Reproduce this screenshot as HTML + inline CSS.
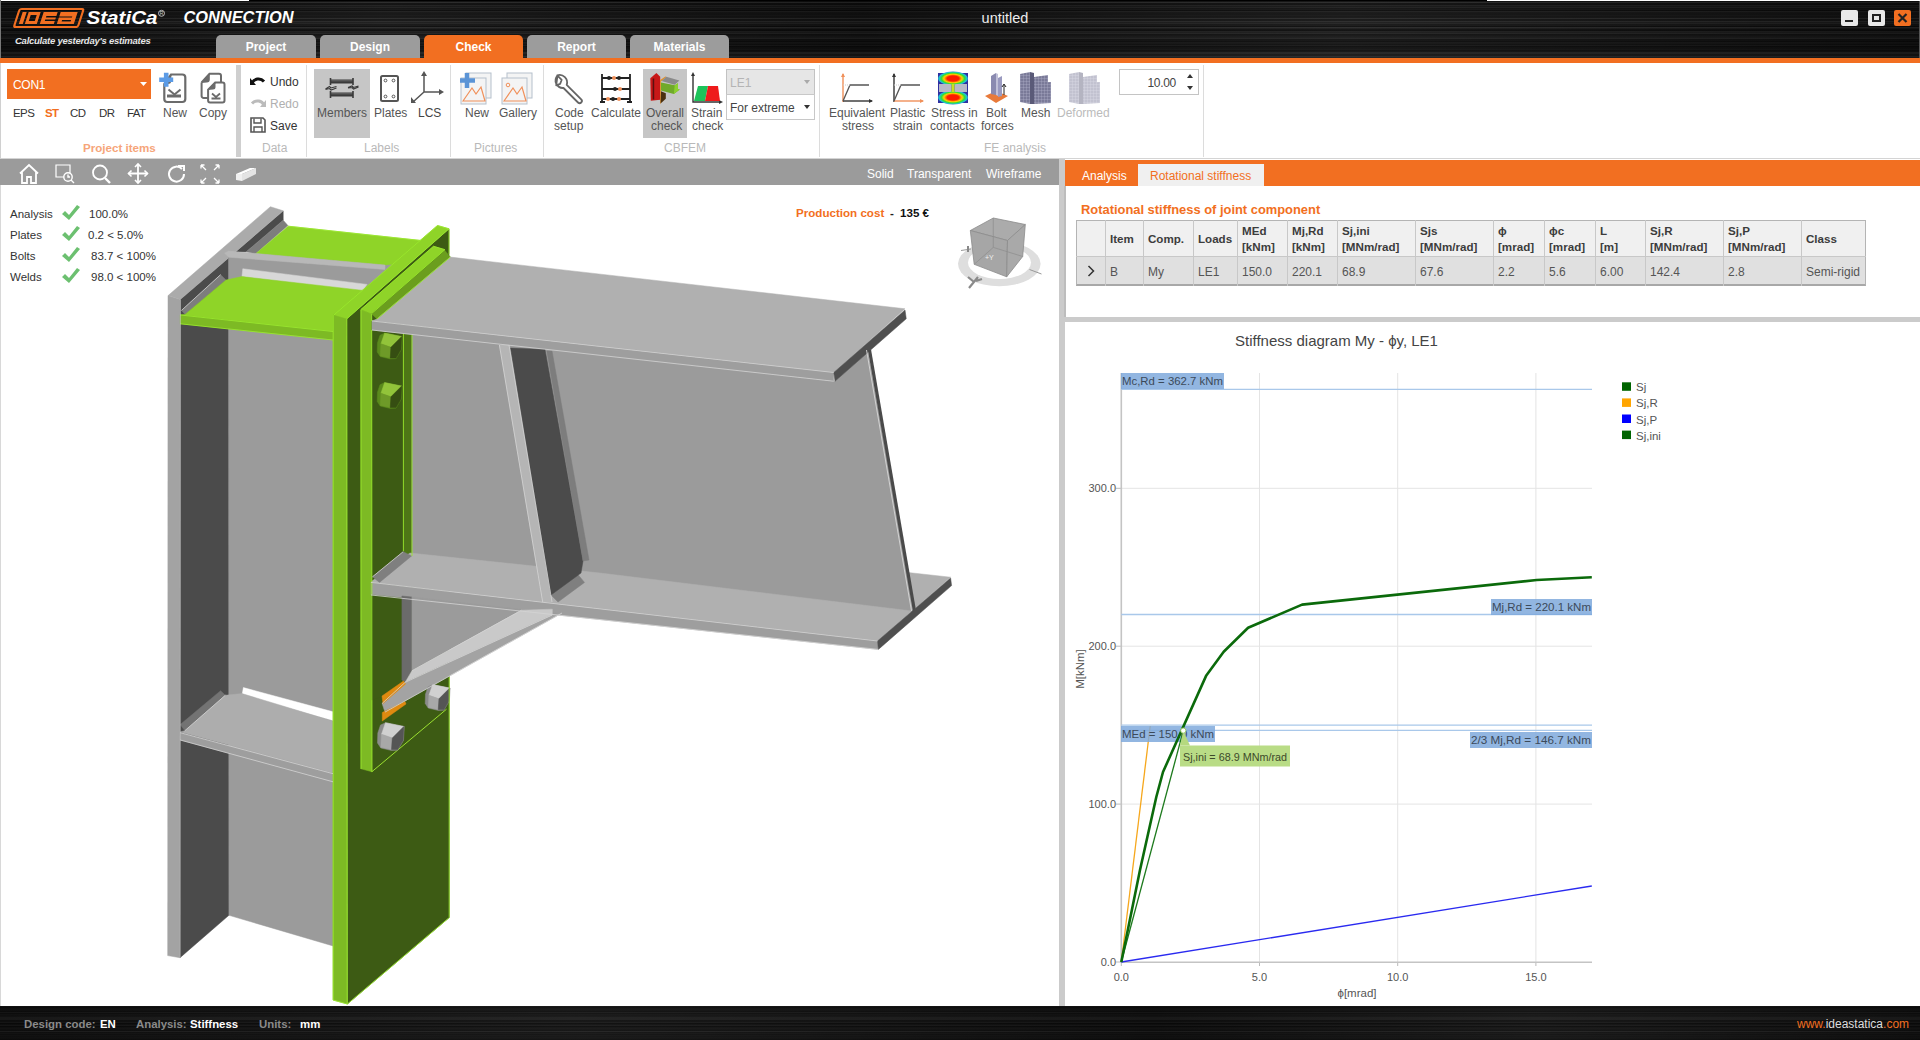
<!DOCTYPE html>
<html><head><meta charset="utf-8">
<style>
*{margin:0;padding:0;box-sizing:border-box}
html,body{width:1920px;height:1040px;overflow:hidden;background:#fff;font-family:"Liberation Sans",sans-serif;position:relative}
.a{position:absolute}
.tab{position:absolute;top:35px;height:23px;background:#9c9c9c;border-radius:5px 5px 0 0;color:#fff;font-weight:bold;font-size:12px;text-align:center;line-height:24px}
.rl{position:absolute;font-size:12px;color:#444;white-space:nowrap;line-height:13px}
.gl{position:absolute;font-size:12px;color:#b9b9b9;white-space:nowrap;line-height:13px}
.sep{position:absolute;top:65px;width:1px;height:92px;background:#dcdcdc}
svg{position:absolute;overflow:visible}
.th{position:absolute;font-size:11.6px;font-weight:bold;color:#3c3c3c;line-height:16px;white-space:nowrap}
.td{position:absolute;font-size:12px;color:#555;white-space:nowrap;line-height:14px}
</style></head><body>
<!-- title bar -->
<div class="a" style="left:0;top:0;width:1920px;height:58px;background:linear-gradient(180deg,rgb(18,18,18) 0px,rgb(18,18,18) 1px,rgb(14,14,14) 1px,rgb(14,14,14) 2px,rgb(40,40,40) 2px,rgb(40,40,40) 3px,rgb(14,14,14) 3px,rgb(14,14,14) 4px,rgb(13,13,13) 4px,rgb(13,13,13) 5px,rgb(30,30,30) 5px,rgb(30,30,30) 6px,rgb(20,20,20) 6px,rgb(20,20,20) 7px,rgb(30,30,30) 7px,rgb(30,30,30) 8px,rgb(16,16,16) 8px,rgb(16,16,16) 9px,rgb(20,20,20) 9px,rgb(20,20,20) 10px,rgb(10,10,10) 10px,rgb(10,10,10) 11px,rgb(30,30,30) 11px,rgb(30,30,30) 12px,rgb(20,20,20) 12px,rgb(20,20,20) 13px,rgb(18,18,18) 13px,rgb(18,18,18) 14px,rgb(18,18,18) 14px,rgb(18,18,18) 15px,rgb(22,22,22) 15px,rgb(22,22,22) 16px,rgb(18,18,18) 16px,rgb(18,18,18) 17px,rgb(20,20,20) 17px,rgb(20,20,20) 18px,rgb(40,40,40) 18px,rgb(40,40,40) 19px,rgb(19,19,19) 19px,rgb(19,19,19) 20px,rgb(20,20,20) 20px,rgb(20,20,20) 21px,rgb(40,40,40) 21px,rgb(40,40,40) 22px,rgb(26,26,26) 22px,rgb(26,26,26) 23px,rgb(34,34,34) 23px,rgb(34,34,34) 24px,rgb(20,20,20) 24px,rgb(20,20,20) 25px,rgb(21,21,21) 25px,rgb(21,21,21) 26px,rgb(11,11,11) 26px,rgb(11,11,11) 27px,rgb(40,40,40) 27px,rgb(40,40,40) 28px,rgb(26,26,26) 28px,rgb(26,26,26) 29px,rgb(14,14,14) 29px,rgb(14,14,14) 30px,rgb(11,11,11) 30px,rgb(11,11,11) 31px,rgb(30,30,30) 31px,rgb(30,30,30) 32px,rgb(26,26,26) 32px,rgb(26,26,26) 33px,rgb(34,34,34) 33px,rgb(34,34,34) 34px,rgb(16,16,16) 34px,rgb(16,16,16) 35px,rgb(19,19,19) 35px,rgb(19,19,19) 36px,rgb(23,23,23) 36px,rgb(23,23,23) 37px,rgb(26,26,26) 37px,rgb(26,26,26) 38px,rgb(34,34,34) 38px,rgb(34,34,34) 39px,rgb(16,16,16) 39px,rgb(16,16,16) 40px,rgb(17,17,17) 40px,rgb(17,17,17) 41px,rgb(11,11,11) 41px,rgb(11,11,11) 42px,rgb(22,22,22) 42px,rgb(22,22,22) 43px,rgb(20,20,20) 43px,rgb(20,20,20) 44px,rgb(14,14,14) 44px,rgb(14,14,14) 45px,rgb(24,24,24) 45px,rgb(24,24,24) 46px,rgb(10,10,10) 46px,rgb(10,10,10) 47px,rgb(15,15,15) 47px,rgb(15,15,15) 48px,rgb(16,16,16) 48px,rgb(16,16,16) 49px,rgb(20,20,20) 49px,rgb(20,20,20) 50px,rgb(12,12,12) 50px,rgb(12,12,12) 51px,rgb(16,16,16) 51px,rgb(16,16,16) 52px,rgb(34,34,34) 52px,rgb(34,34,34) 53px,rgb(34,34,34) 53px,rgb(34,34,34) 54px,rgb(22,22,22) 54px,rgb(22,22,22) 55px,rgb(23,23,23) 55px,rgb(23,23,23) 56px,rgb(40,40,40) 56px,rgb(40,40,40) 57px,rgb(30,30,30) 57px,rgb(30,30,30) 58px)"></div>
<div class="a" style="left:0;top:0;width:1920px;height:58px;background:linear-gradient(90deg,rgba(0,0,0,0.25),rgba(255,255,255,0.03) 20%,rgba(0,0,0,0.2) 45%,rgba(255,255,255,0.04) 70%,rgba(0,0,0,0.25))"></div>
<div class="a" style="left:0;top:0;width:249px;height:1px;background:#fff"></div>
<div class="a" style="left:249px;top:0;width:1238px;height:1px;background:#000"></div>
<div class="a" style="left:1487px;top:0;width:433px;height:1px;background:#fff"></div>
<div class="a" style="left:0;top:0;width:1px;height:58px;background:#777"></div><div class="a" style="left:1919px;top:1px;width:1px;height:57px;background:#555"></div>
<div class="a" style="left:0;top:58px;width:1920px;height:5px;background:#f26f21"></div>
<!-- logo -->
<svg style="left:0;top:0" width="250" height="58">
 <g transform="translate(16,8) skewX(-18)">
  <rect x="4" y="1" width="64" height="18" rx="2" fill="none" stroke="#f26f21" stroke-width="2.2"/>
  <rect x="8" y="4" width="4" height="12" fill="#f26f21"/>
  <path d="M14 4h12v12h-12z M17 7v6h6v-6z" fill="#f26f21" fill-rule="evenodd"/>
  <path d="M29 4h14v4h-10v1.5h10v2h-10v1.5h10v3h-14z" fill="#f26f21"/>
  <path d="M46 4h17v12h-17v-6.5h13v-1h-13z M50 12v1.5h9v-1.5z" fill="#f26f21" fill-rule="evenodd"/>
 </g>
 <text x="86.5" y="24.3" font-family="Liberation Sans" font-weight="bold" font-style="italic" font-size="18.5" fill="#fff" textLength="71" lengthAdjust="spacingAndGlyphs">StatiCa</text>
 <circle cx="161.5" cy="13.3" r="3" fill="none" stroke="#ccc" stroke-width="0.9"/><text x="159.8" y="15.3" font-family="Liberation Sans" font-size="5" fill="#ccc">R</text>
 <text x="183.5" y="23.3" font-family="Liberation Sans" font-weight="bold" font-style="italic" font-size="15.8" fill="#fff" textLength="110" lengthAdjust="spacingAndGlyphs">CONNECTION</text>
 <text x="15" y="44" font-family="Liberation Sans" font-weight="bold" font-style="italic" font-size="9.5" fill="#e6e6e6" letter-spacing="-0.25">Calculate yesterday's estimates</text>
</svg>
<div class="tab" style="left:216px;width:100px">Project</div>
<div class="tab" style="left:320px;width:100px">Design</div>
<div class="tab" style="left:424px;width:99px;background:#f26f21;height:24px">Check</div>
<div class="tab" style="left:527px;width:99px">Report</div>
<div class="tab" style="left:630px;width:99px">Materials</div>
<div class="a" style="left:945px;top:10px;width:120px;text-align:center;color:#ececec;font-size:14.5px;line-height:16px">untitled</div>
<!-- window buttons -->
<div class="a" style="left:1841px;top:10px;width:17px;height:16px;background:#e8e8e8;border-radius:2px"></div>
<div class="a" style="left:1845px;top:20px;width:8px;height:2px;background:#222"></div>
<div class="a" style="left:1868px;top:10px;width:17px;height:16px;background:#e8e8e8;border-radius:2px"></div>
<div class="a" style="left:1872px;top:14px;width:9px;height:8px;border:2px solid #222"></div>
<div class="a" style="left:1894px;top:10px;width:17px;height:16px;background:#f26f21;border-radius:2px"></div>
<svg style="left:1894px;top:10px" width="17" height="16"><path d="M4.5 4l8 8M12.5 4l-8 8" stroke="#222" stroke-width="2.2"/></svg>
<!-- ribbon -->
<div class="a" style="left:0;top:63px;width:1px;height:96px;background:#d0d0d0"></div>
<div class="a" style="left:0;top:158px;width:1920px;height:1px;background:#d4d4d4"></div>
<!-- project items -->
<div class="a" style="left:7px;top:69px;width:144px;height:30px;background:#f26f21"></div>
<div class="a" style="left:13px;top:78px;font-size:12px;color:#fff;line-height:14px;letter-spacing:-0.3px">CON1</div>
<svg style="left:140px;top:82px" width="8" height="5"><path d="M0 0h7l-3.5 4z" fill="#fff"/></svg>
<div class="rl" style="left:13px;top:107px;color:#333;font-size:11.5px;letter-spacing:-0.6px">EPS</div>
<div class="rl" style="left:45px;top:107px;color:#f26f21;font-weight:bold;font-size:11.5px;letter-spacing:-0.6px">ST</div>
<div class="rl" style="left:70px;top:107px;color:#333;font-size:11.5px;letter-spacing:-0.6px">CD</div>
<div class="rl" style="left:99px;top:107px;color:#333;font-size:11.5px;letter-spacing:-0.6px">DR</div>
<div class="rl" style="left:127px;top:107px;color:#333;font-size:11.5px;letter-spacing:-0.6px">FAT</div>
<svg style="left:159px;top:72px" width="30" height="32">
 <path d="M12 2.5h11.3a3 3 0 0 1 3 3v21.5a3 3 0 0 1-3 3h-15a3 3 0 0 1-3-3v-15z" fill="none" stroke="#6b6b6b" stroke-width="2.2"/>
 <path d="M4.8 12l7.5-9.5v6a3.5 3.5 0 0 1-3.5 3.5z" fill="#6b6b6b"/>
 <path d="M9.5 17.5l6 5 6-5" fill="none" stroke="#6b6b6b" stroke-width="2"/>
 <path d="M8 24h14" stroke="#6b6b6b" stroke-width="3"/>
 <path d="M7.2 0.8v14M0.2 7.8h14" stroke="#5b9be6" stroke-width="4.6"/>
</svg>
<div class="rl" style="left:163px;top:107px;color:#555">New</div>
<svg style="left:200px;top:72px" width="30" height="32">
 <path d="M1.6 10.5L9.5 1.8H19a2 2 0 0 1 2 2V11M1.6 10.5V24a2 2 0 0 0 2 2H8" fill="none" stroke="#6b6b6b" stroke-width="2"/>
 <path d="M1.2 11L9.8 1.5V7.5a3 3 0 0 1-3 3z" fill="#6b6b6b"/>
 <path d="M8.1 17.6L15.2 10.6H22.5a2 2 0 0 1 2 2V28.6a2 2 0 0 1-2 2H10.1a2 2 0 0 1-2-2z" fill="#fff" stroke="#6b6b6b" stroke-width="2"/>
 <path d="M7.8 18L15.5 10.3V15a2.5 2.5 0 0 1-2.5 2.5z" fill="#6b6b6b"/>
 <path d="M12 21.5l4 3.5 4-3.5M11.5 26.5h9" fill="none" stroke="#6b6b6b" stroke-width="1.8"/>
</svg>
<div class="rl" style="left:199px;top:107px;color:#555">Copy</div>
<div class="a" style="left:83px;top:140.5px;font-size:11.6px;font-weight:bold;color:#f6a57a;line-height:13px;white-space:nowrap">Project items</div>
<div class="a" style="left:236px;top:65px;width:5px;height:92px;background:#cfcfcf"></div>
<!-- data -->
<svg style="left:250px;top:76px" width="16" height="10"><path d="M2 7c2-4 8-6 12-1.5" fill="none" stroke="#111" stroke-width="3"/><path d="M0 2l0 7 6 0z" fill="#111"/></svg>
<div class="rl" style="left:270px;top:76px;color:#333">Undo</div>
<svg style="left:250px;top:98px" width="16" height="10"><path d="M14 7c-2-4-8-6-12-1.5" fill="none" stroke="#bbb" stroke-width="3"/><path d="M16 2l0 7-6 0z" fill="#bbb"/></svg>
<div class="rl" style="left:270px;top:98px;color:#b0b0b0">Redo</div>
<svg style="left:250px;top:117px" width="16" height="16"><path d="M1 1h12l2 2v12h-14z" fill="none" stroke="#555" stroke-width="1.6"/><path d="M4 1.5v4.5h7v-4.5M4 15v-5h8v5" fill="none" stroke="#555" stroke-width="1.4"/></svg>
<div class="rl" style="left:270px;top:120px;color:#333">Save</div>
<div class="gl" style="left:262px;top:141.5px">Data</div>
<div class="sep" style="left:306px"></div>
<!-- labels -->
<div class="a" style="left:314px;top:69px;width:56px;height:69px;background:#c6c6c6"></div>
<svg style="left:325px;top:77px" width="34" height="22">
 <path d="M5.5 2.5h22.5v4h-22.5zM5.5 15.5h22.5v4h-22.5z" fill="#3a3a3a"/>
 <path d="M5.5 3.8h22.5M5.5 16.8h22.5" stroke="#777" stroke-width="0.8"/>
 <path d="M5.5 1v7M28 1v7M5.5 14v7M28 14v7" stroke="#3a3a3a" stroke-width="1.6"/>
 <path d="M0.5 12l4-2.5 1.5 1.5 5.5-1.5M0.5 12.5l4-1 1.5 1.5 5.5-2M23 10.5l4-1.5 1.5 1.5 5-1.5M23 11l4-0.5 1.5 1.5 5-2" fill="none" stroke="#3a3a3a" stroke-width="1.1"/>
</svg>
<div class="rl" style="left:317px;top:107px;color:#555">Members</div>
<svg style="left:380px;top:75px" width="20" height="27"><rect x="1" y="1" width="17" height="25" rx="1.5" fill="none" stroke="#555" stroke-width="2"/><circle cx="5.5" cy="5.5" r="1.4" fill="none" stroke="#555"/><circle cx="13.5" cy="5.5" r="1.4" fill="none" stroke="#555"/><circle cx="5.5" cy="21.5" r="1.4" fill="none" stroke="#555"/><circle cx="13.5" cy="21.5" r="1.4" fill="none" stroke="#555"/></svg>
<div class="rl" style="left:374px;top:107px;color:#555">Plates</div>
<svg style="left:410px;top:71px" width="34" height="32"><path d="M14 3v18l-11 10M14 21h17" fill="none" stroke="#555" stroke-width="1.5"/><path d="M11 5l3-5 3 5zM29 18l5 3-5 3zM1 26l0 6 5 0z" fill="#555"/></svg>
<div class="rl" style="left:418px;top:107px;color:#444">LCS</div>
<div class="gl" style="left:364px;top:141.5px">Labels</div>
<div class="sep" style="left:450px"></div>
<!-- pictures -->
<svg style="left:460px;top:72px" width="34" height="33">
 <rect x="6" y="1" width="25" height="25" fill="#f4f4f4" stroke="#b5c0cc"/>
 <rect x="1" y="6" width="25" height="26" fill="#f4f4f4" stroke="#b5c0cc"/>
 <path d="M3 29l9-13 4 6 5-7 4 14z" fill="none" stroke="#f0905a" stroke-width="1.2"/>
 <path d="M7 1v15M0 8.5h15" stroke="#5b94d6" stroke-width="4.5"/>
</svg>
<div class="rl" style="left:465px;top:107px;color:#555">New</div>
<svg style="left:501px;top:72px" width="34" height="33">
 <rect x="6" y="1" width="25" height="25" fill="#f4f4f4" stroke="#b5c0cc"/>
 <rect x="1" y="6" width="25" height="26" fill="#f4f4f4" stroke="#b5c0cc"/>
 <path d="M3 29l9-13 4 6 5-7 4 14z" fill="none" stroke="#f0905a" stroke-width="1.2"/>
 <circle cx="7" cy="13" r="1.8" fill="none" stroke="#f0905a" stroke-width="1"/>
</svg>
<div class="rl" style="left:499px;top:107px;color:#555">Gallery</div>
<div class="gl" style="left:474px;top:141.5px">Pictures</div>
<div class="sep" style="left:543px"></div>
<!-- cbfem -->
<svg style="left:553px;top:72px" width="32" height="32"><path d="M4.5 3.5a7.5 7.5 0 0 0 6 12.5l14.5 14.5a2.2 2.2 0 0 0 3.2-3.2l-14.5-14.5a7.5 7.5 0 0 0-9.5-9.5l4.5 4.5-1.5 4-4 1.5z" fill="#fff" stroke="#666" stroke-width="1.8" stroke-linejoin="round"/></svg>
<div class="rl" style="left:555px;top:107px;color:#555">Code</div>
<div class="rl" style="left:554px;top:120px;color:#555">setup</div>
<svg style="left:600px;top:72px" width="32" height="32"><path d="M2 2v28M30 2v28M0 30h5M27 30h5M2 6h28M2 17h28M2 27h28" stroke="#222" stroke-width="1.8"/><circle cx="9" cy="6" r="2" fill="#222"/><circle cx="14" cy="6" r="2" fill="#f0905a"/><circle cx="19" cy="6" r="2" fill="#222"/><circle cx="15" cy="17" r="2" fill="#222"/><circle cx="20" cy="17" r="2" fill="#f0905a"/><circle cx="8" cy="27" r="2" fill="#f0905a"/><circle cx="13" cy="27" r="2" fill="#222"/><circle cx="19" cy="27" r="2" fill="#f0905a"/></svg>
<div class="rl" style="left:591px;top:107px;color:#555">Calculate</div>
<div class="a" style="left:643px;top:69px;width:44px;height:69px;background:#c6c6c6"></div>
<svg style="left:650px;top:72px" width="32" height="34">
 <path d="M0.3 6.2L6.4 1L10.2 4.8V27.8L0.8 28.7z" fill="#c81818"/>
 <path d="M2.7 6.5h1.5v21h-1.5z" fill="#5a1010"/>
 <path d="M10.2 8L15.8 4.3V5.5L11 9.5V31.5H10.2z" fill="#e89020"/>
 <path d="M11 19.3L15.8 21.2V26.8L10.6 31.5z" fill="#4a3010"/>
 <path d="M11.6 9L16.3 4.8L29.4 8.5L24.7 12.8z" fill="#8a8a8a"/>
 <path d="M11 10.4L24.7 13.2L28 11.3V17L29.8 17.4L23.8 22.1L11 18.4z" fill="#70aa2a"/>
 <path d="M24.7 13.2L28 11.3V17L29.8 17.4L23.8 22.1z" fill="#8cd030"/>
</svg>
<div class="rl" style="left:646px;top:107px;color:#555">Overall</div>
<div class="rl" style="left:651px;top:120px;color:#555">check</div>
<svg style="left:691px;top:72px" width="32" height="32"><path d="M2 2v28h28" fill="none" stroke="#333" stroke-width="1.4"/><path d="M0 4l2-4 2 4zM28 28l4 2-4 2z" fill="#333"/><path d="M3 29l4-15h10l-3 15z" fill="#1dc35a"/><path d="M14 29l3-15h10l2 15z" fill="#ee1b1b"/></svg>
<div class="rl" style="left:691px;top:107px;color:#555">Strain</div>
<div class="rl" style="left:692px;top:120px;color:#555">check</div>
<div class="a" style="left:726px;top:69px;width:89px;height:26px;background:#e6e6e6;border:1px solid #c2c2c2"></div>
<div class="a" style="left:730px;top:77px;font-size:12px;color:#b4b4b4;line-height:13px">LE1</div>
<svg style="left:804px;top:80px" width="7" height="5"><path d="M0 0h6l-3 4z" fill="#aaa"/></svg>
<div class="a" style="left:726px;top:94px;width:89px;height:26px;background:#fff;border:1px solid #c8c8c8"></div>
<div class="a" style="left:730px;top:102px;font-size:12px;color:#444;line-height:13px">For extreme</div>
<svg style="left:804px;top:105px" width="7" height="5"><path d="M0 0h6l-3 4z" fill="#333"/></svg>
<div class="gl" style="left:664px;top:141.5px">CBFEM</div>
<div class="sep" style="left:819px"></div>
<!-- FE analysis -->
<svg style="left:840px;top:72px" width="34" height="32"><path d="M3 2v28" stroke="#f0905a" stroke-width="1.4"/><path d="M1 5l2-4 2 4z" fill="#f0905a"/><path d="M3 29h29" stroke="#333" stroke-width="1.4"/><path d="M29 27l4 2-4 2z" fill="#333"/><path d="M3 29l7-16h19" fill="none" stroke="#555" stroke-width="1.3"/><path d="M3 13h7" stroke="#ccc" stroke-dasharray="1 1"/></svg>
<div class="rl" style="left:829px;top:107px;color:#555">Equivalent</div>
<div class="rl" style="left:842px;top:120px;color:#555">stress</div>
<svg style="left:891px;top:72px" width="34" height="32"><path d="M3 2v28" stroke="#333" stroke-width="1.4"/><path d="M1 5l2-4 2 4z" fill="#333"/><path d="M3 29h29" stroke="#f0905a" stroke-width="1.4"/><path d="M29 27l4 2-4 2z" fill="#f0905a"/><path d="M3 29l7-16h19" fill="none" stroke="#555" stroke-width="1.3"/><path d="M3 13h7" stroke="#ccc" stroke-dasharray="1 1"/></svg>
<div class="rl" style="left:890px;top:107px;color:#555">Plastic</div>
<div class="rl" style="left:893px;top:120px;color:#555">strain</div>
<svg style="left:938px;top:73px" width="30" height="30">
 <defs><radialGradient id="hs" cx="50%" cy="50%" r="55%"><stop offset="0.35" stop-color="#ff1a00"/><stop offset="0.55" stop-color="#ffd000"/><stop offset="0.7" stop-color="#30e030"/><stop offset="0.85" stop-color="#20c0e0"/><stop offset="1" stop-color="#2030a0"/></radialGradient></defs>
 <rect x="0" y="0" width="30" height="30" fill="#3030a0"/>
 <ellipse cx="15" cy="5.5" rx="15" ry="7" fill="url(#hs)"/>
 <ellipse cx="15" cy="24.5" rx="15" ry="7" fill="url(#hs)"/>
 <path d="M1 11h11c1 0 1.5 1 1.5 2v4c0 1-.5 2-1.5 2h-11zM29 11h-11c-1 0-1.5 1-1.5 2v4c0 1 .5 2 1.5 2h11z" fill="#b8b8c8"/>
 <rect x="13.5" y="11" width="3" height="8" fill="#c8e020"/>
</svg>
<div class="rl" style="left:931px;top:107px;color:#555">Stress in</div>
<div class="rl" style="left:930px;top:120px;color:#555">contacts</div>
<svg style="left:985px;top:72px" width="24" height="32"><path d="M0 24l11-5 12 5-12 7z" fill="#e87a3a"/><path d="M6 4l5-3v22l-5-1z" fill="#8a8ab0"/><path d="M11 1l2 1v22l-2-1z" fill="#c0c0d8"/><path d="M13 6l4-2v20l-4 1z" fill="#9a9ac0"/><path d="M19 13v10M17 15l2-3 2 3" stroke="#222" fill="none" stroke-width="1"/></svg>
<div class="rl" style="left:986px;top:107px;color:#555">Bolt</div>
<div class="rl" style="left:981px;top:120px;color:#555">forces</div>
<svg style="left:1020px;top:72px" width="32" height="32">
 <defs><pattern id="mg" width="3" height="3" patternUnits="userSpaceOnUse"><rect width="3" height="3" fill="#7a7a98"/><path d="M0 0h3M0 0v3" stroke="#b8b8d0" stroke-width="0.6"/></pattern></defs>
 <path d="M0 2l10-2 0 32-10-2z" fill="url(#mg)"/><path d="M10 0l4 1v31l-4 0z" fill="#5a5a78"/><path d="M14 5l14 -2v8l-14 2z" fill="url(#mg)"/><path d="M14 11l17 -1v21l-17 1z" fill="url(#mg)"/>
</svg>
<div class="rl" style="left:1021px;top:107px;color:#555">Mesh</div>
<svg style="left:1069px;top:72px" width="32" height="32" opacity="0.45">
 <path d="M0 2l10-2 0 32-10-2z" fill="url(#mg)"/><path d="M10 0l4 1v31l-4 0z" fill="#5a5a78"/><path d="M14 5l14 -2v8l-14 2z" fill="url(#mg)"/><path d="M14 11l17 -1v21l-17 1z" fill="url(#mg)"/>
</svg>
<div class="rl" style="left:1057px;top:107px;color:#bbb">Deformed</div>
<div class="gl" style="left:984px;top:141.5px">FE analysis</div>
<div class="a" style="left:1119px;top:69px;width:80px;height:26px;background:#fff;border:1px solid #c4c4c4"></div>
<div class="a" style="left:1140px;top:77px;width:36px;text-align:right;font-size:12px;color:#444;line-height:13px;letter-spacing:-0.3px">10.00</div>
<svg style="left:1187px;top:73px" width="7" height="18"><path d="M0 5h6l-3-4zM0 13h6l-3 4z" fill="#333"/></svg>
<div class="sep" style="left:1203px"></div>
<!-- viewport toolbar -->
<div class="a" style="left:0;top:159px;width:1059px;height:26px;background:#9b9b9b"></div>
<div class="a" style="left:0;top:185px;width:1px;height:821px;background:#d8d8d8"></div>
<svg style="left:19px;top:164px" width="240" height="20" fill="none" stroke="#fff" stroke-width="1.8">
 <path d="M1 9.5l9-8.5 9 8.5M3 8v11h5v-6h4v6h5v-11"/>
 <path d="M37 1h14v12h-14z" stroke-width="1.2"/>
 <circle cx="49" cy="13" r="4.2" fill="#9b9b9b" stroke-width="1.4"/><path d="M49 10.5v2.5h2M52 16l3 3" stroke-width="1.4"/>
 <circle cx="81" cy="8.5" r="7"/><path d="M86 14l5 5" stroke-width="2.4"/>
 <path d="M119 0v19M109.5 9.5h19" stroke-width="1.8"/><path d="M116 3l3-3 3 3M116 16l3 3 3-3M112.5 6.5l-3 3 3 3M125.5 6.5l3 3-3 3" stroke-width="1.6"/>
 <path d="M163 5a7.5 7.5 0 1 0 2 5" stroke-width="2"/><path d="M159 2h6v5" stroke-width="2"/>
 <path d="M182 1l5 5M182 1h3.5M182 1v3.5M200 1l-5 5M200 1h-3.5M200 1v3.5M182 19l5-5M182 19h3.5M182 19v-3.5M200 19l-5-5M200 19h-3.5M200 19v-3.5" stroke-width="1.3"/>
</svg>
<svg style="left:235px;top:167px" width="22" height="14"><path d="M1 7l14-6h6l-14 6z" fill="#fff"/><path d="M1 7v6l6 1v-7z" fill="#f0f0f0"/><path d="M7 7l14-6v6l-14 7z" fill="#e4e4e4"/></svg>
<div class="a" style="left:867px;top:167px;font-size:12px;color:#fff;line-height:14px">Solid</div>
<div class="a" style="left:907px;top:167px;font-size:12px;color:#fff;line-height:14px">Transparent</div>
<div class="a" style="left:986px;top:167px;font-size:12px;color:#fff;line-height:14px">Wireframe</div>
<!-- check list -->
<div class="a" style="left:10px;top:208px;font-size:11.5px;color:#333;line-height:13px">Analysis</div>
<div class="a" style="left:10px;top:229px;font-size:11.5px;color:#333;line-height:13px">Plates</div>
<div class="a" style="left:10px;top:250px;font-size:11.5px;color:#333;line-height:13px">Bolts</div>
<div class="a" style="left:10px;top:271px;font-size:11.5px;color:#333;line-height:13px">Welds</div>
<svg style="left:62px;top:205px" width="18" height="80" fill="#6cc070">
 <path d="M0 9l3-3 4 4 8-10 3 2-11 13z"/>
 <path transform="translate(0,21)" d="M0 9l3-3 4 4 8-10 3 2-11 13z"/>
 <path transform="translate(0,42)" d="M0 9l3-3 4 4 8-10 3 2-11 13z"/>
 <path transform="translate(0,63)" d="M0 9l3-3 4 4 8-10 3 2-11 13z"/>
</svg>
<div class="a" style="left:89px;top:208px;font-size:11.5px;color:#333;line-height:13px">100.0%</div>
<div class="a" style="left:88px;top:229px;font-size:11.5px;color:#333;line-height:13px;white-space:pre">0.2 &lt; 5.0%</div>
<div class="a" style="left:91px;top:250px;font-size:11.5px;color:#333;line-height:13px;white-space:pre">83.7 &lt; 100%</div>
<div class="a" style="left:91px;top:271px;font-size:11.5px;color:#333;line-height:13px;white-space:pre">98.0 &lt; 100%</div>
<div class="a" style="left:796px;top:206px;font-size:11.6px;font-weight:bold;color:#f26f21;line-height:14px;white-space:nowrap">Production cost</div>
<div class="a" style="left:890px;top:206px;font-size:11.6px;font-weight:bold;color:#222;line-height:14px">-</div>
<div class="a" style="left:900px;top:206px;font-size:11.6px;font-weight:bold;color:#111;line-height:14px;white-space:nowrap">135 €</div>
<!-- nav cube -->
<svg style="left:950px;top:205px" width="100" height="90">
 <ellipse cx="49.3" cy="58.8" rx="41.3" ry="22.5" fill="#dedede"/>
 <ellipse cx="49.5" cy="57.5" rx="31.5" ry="16.5" fill="#fff"/>
 <path d="M20.3 25.5L43.3 13L75.3 19.5L57.5 35.5z" fill="#ababab" stroke="#8c8c8c" stroke-width="0.8"/>
 <path d="M20.3 25.5L57.5 35.5L56.7 71.8L24.2 59.3z" fill="#a6a6a6" stroke="#8c8c8c" stroke-width="0.8"/>
 <path d="M57.5 35.5L75.3 19.5L72.7 51.5L56.7 71.8z" fill="#a9a9a9" stroke="#8c8c8c" stroke-width="0.8"/>
 <path d="M43.3 13V42.4L24.2 59.3M43.3 42.4L72.7 51.5" fill="none" stroke="#8c8c8c" stroke-width="0.7"/>
 <path d="M19 83l9-11M24 77l-6-5M26 76l6-2" stroke="#8a8a8a" stroke-width="2.2" fill="none"/>
 <path d="M11 45.5l10-1.5M79.5 64.5l12 4.5" stroke="#999" stroke-width="1" fill="none"/>
 <path d="M18 41v6" stroke="#888" stroke-width="2"/>
 <text x="35" y="55" font-size="7" fill="#eee" font-family="Liberation Sans">+Y</text>
</svg>
<!-- 3D model -->
<svg style="left:0;top:0" width="1060" height="1006" shape-rendering="geometricPrecision">
<polygon points="168,295.6 180.2,299.6 180,957.7 167.7,955.6" fill="#a3a3a3" stroke="#a3a3a3" stroke-width="0.5" stroke-linejoin="round"/>
<polygon points="180.2,299.6 283.2,211 283.2,220.2 246.2,251.8 228.7,252 228.9,915.3 180,957.7" fill="#4b4b4b" stroke="#4b4b4b" stroke-width="0.5" stroke-linejoin="round"/>
<polygon points="168.1,295.6 270.4,206.7 283.2,210.8 180.2,299.6" fill="#ababab" stroke="#ababab" stroke-width="0.5" stroke-linejoin="round"/>
<polygon points="228.7,253 400,255 400,300 340,340 340,948 229,915.3" fill="#9b9b9b" stroke="#9b9b9b" stroke-width="0.5" stroke-linejoin="round"/>
<polygon points="246.2,251.8 283.2,220.2 287.9,225.6 255.6,253.8" fill="#7d7d7d" stroke="#7d7d7d" stroke-width="0.5" stroke-linejoin="round"/>
<polygon points="255.6,253.8 288.1,226.2 421,240.5 397,264 385,265 260,254" fill="#8fd428" stroke="#8fd428" stroke-width="0.5" stroke-linejoin="round"/>
<polygon points="224.6,253.2 228.7,251.1 385,265 385,269.5 228.7,257.2" fill="#b8b8b8" stroke="#b8b8b8" stroke-width="0.5" stroke-linejoin="round"/>
<polygon points="242.8,268.75 367,284.4 362,291 242,276.6" fill="#d8d8d8" stroke="#d8d8d8" stroke-width="0.5" stroke-linejoin="round"/>
<polygon points="181.5,310.4 220.6,274.7 226,280 185,314.4" fill="#7d7d7d" stroke="#7d7d7d" stroke-width="0.5" stroke-linejoin="round"/>
<polygon points="180.2,315 185,314.4 226,280 242,276.6 363,290.4 340,332.3" fill="#8fd428" stroke="#8fd428" stroke-width="0.5" stroke-linejoin="round"/>
<polygon points="180.2,315 340,332.3 340,340.3 180.2,323.8" fill="#7dba24" stroke="#7dba24" stroke-width="0.5" stroke-linejoin="round"/>
<polygon points="180.2,724.6 220.6,690.7 225.3,695.3 184.9,730.7" fill="#737373" stroke="#737373" stroke-width="0.5" stroke-linejoin="round"/>
<polygon points="243.4,687.6 333,711.8 333,720.6 242.1,695" fill="#ffffff" stroke="#ffffff" stroke-width="0.5" stroke-linejoin="round"/>
<polygon points="184.9,730.7 225.3,695.3 242,693.6 333,721.2 333,773 180.2,732" fill="#adadad" stroke="#adadad" stroke-width="0.5" stroke-linejoin="round"/>
<polygon points="180.2,732.7 333,773.7 333,781.8 180.2,740" fill="#9e9e9e" stroke="#9e9e9e" stroke-width="0.5" stroke-linejoin="round"/>
<polygon points="346.6,319 449,228.8 449.4,917.4 347.4,1004" fill="#3d5b14" stroke="#3d5b14" stroke-width="0.5" stroke-linejoin="round"/>
<polygon points="333.9,315 437.5,225.5 449,228.8 346.6,319" fill="#8fd428" stroke="#8fd428" stroke-width="0.5" stroke-linejoin="round"/>
<polygon points="333,315 346.6,319 347.4,1004 333,1000" fill="#7dba24" stroke="#7dba24" stroke-width="0.5" stroke-linejoin="round"/>
<polygon points="360.8,309.6 371.5,313.7 371.9,771.7 361,768.8" fill="#7dba24" stroke="#7dba24" stroke-width="0.5" stroke-linejoin="round"/>
<polygon points="360.8,309.6 433.5,246.3 444.9,249.7 371.5,313.7" fill="#8fd428" stroke="#8fd428" stroke-width="0.5" stroke-linejoin="round"/>
<polygon points="371.5,313.7 444.9,250.4 450.3,257.1 376.9,319" fill="#6b9e1e" stroke="#6b9e1e" stroke-width="0.5" stroke-linejoin="round"/>
<polygon points="403.4,325 412.2,325 412.2,560 403.4,560" fill="#4e7616" stroke="#4e7616" stroke-width="0.5" stroke-linejoin="round"/>
<polyline points="371.9,771.7 446.5,709.2" fill="none" stroke="#9be030" stroke-width="1"/>
<polygon points="412,330 835,381.25 868,352 915,612 412,560" fill="#9b9b9b" stroke="#9b9b9b" stroke-width="0.5" stroke-linejoin="round"/>
<polygon points="376.9,319 450.3,257.1 905,308.75 833.75,372.5 372,321" fill="#b0b0b0" stroke="#b0b0b0" stroke-width="0.5" stroke-linejoin="round"/>
<polygon points="372,321 833.75,372.5 833.75,381.25 372,330" fill="#9e9e9e" stroke="#9e9e9e" stroke-width="0.5" stroke-linejoin="round"/>
<polygon points="833.75,372.5 905,310 906.25,318.75 835,381.25" fill="#4f4f4f" stroke="#4f4f4f" stroke-width="0.5" stroke-linejoin="round"/>
<polygon points="372,581 410,553 600,573 912,611 908,572.5 950.6,577.2 877.5,641 371,582.4" fill="#b0b0b0" stroke="#b0b0b0" stroke-width="0.5" stroke-linejoin="round"/>
<polyline points="869.5,350 914.5,611" fill="none" stroke="#4a4a4a" stroke-width="3.2"/>
<polyline points="866.5,350 911.5,611" fill="none" stroke="#d8d8d8" stroke-width="0.9"/>
<polygon points="372.5,576.8 403.2,551.7 411.6,555.9 379.5,582.4" fill="#7f7f7f" stroke="#7f7f7f" stroke-width="0.5" stroke-linejoin="round"/>
<polygon points="551,595 577.5,574 584.5,582.4 558,602" fill="#7f7f7f" stroke="#7f7f7f" stroke-width="0.5" stroke-linejoin="round"/>
<polygon points="371,582.4 877.5,641 878.4,649.4 371,595" fill="#9e9e9e" stroke="#9e9e9e" stroke-width="0.5" stroke-linejoin="round"/>
<polygon points="877.5,641 950.6,578 951.6,585.6 878.4,649.4" fill="#4f4f4f" stroke="#4f4f4f" stroke-width="0.5" stroke-linejoin="round"/>
<polygon points="499.4,345 509,345 552,602 542.7,602" fill="#b5b5b5" stroke="#b5b5b5" stroke-width="0.5" stroke-linejoin="round"/>
<polygon points="510.6,348 545,349.5 583,561 581,573 551,595" fill="#4b4b4b" stroke="#4b4b4b" stroke-width="0.5" stroke-linejoin="round"/>
<polygon points="546.8,351 552,351 589,560 583,561" fill="#7d7d7d" stroke="#7d7d7d" stroke-width="0.5" stroke-linejoin="round"/>
<polygon points="371.9,595 402,598 402,690 371.9,700" fill="#3d5b14" stroke="#3d5b14" stroke-width="0.5" stroke-linejoin="round"/>
<polygon points="401.9,596 411.9,597 411.9,670.8 405.2,682.3 401.9,680" fill="#6b6b6b" stroke="#6b6b6b" stroke-width="0.5" stroke-linejoin="round"/>
<polygon points="411.9,597 560,614 521.5,610.2 411.9,670.8" fill="#9b9b9b" stroke="#9b9b9b" stroke-width="0.5" stroke-linejoin="round"/>
<polygon points="405.2,682.3 411.9,670.8 521.5,610.2 552.3,609.2 552.3,615" fill="#c9c9c9" stroke="#c9c9c9" stroke-width="0.5" stroke-linejoin="round"/>
<polygon points="382.1,703.5 405.2,682.3 552.3,615 562,613 385,712.1" fill="#a3a3a3" stroke="#a3a3a3" stroke-width="0.5" stroke-linejoin="round"/>
<polygon points="382,696 403.5,681 405.5,684 383,703.5" fill="#e08a10" stroke="#e08a10" stroke-width="0.5" stroke-linejoin="round"/>
<polygon points="382.3,712.5 405,701.5 406,704 388.5,716.5 382.3,721" fill="#e08a10" stroke="#e08a10" stroke-width="0.5" stroke-linejoin="round"/>
<polygon points="384.64,333.081 379.99,335.22 377.479,342.66 377.2,351.96 380.269,356.61 390.22,358.935 395.986,358.656 401.38,349.542 402.124,336.615" fill="#5a8a1c" stroke="#5a8a1c" stroke-width="0.5" stroke-linejoin="round"/>
<polygon points="384.64,333.081 401.659,336.615 390.964,347.31 380.92,343.776" fill="#92c43a" stroke="#92c43a" stroke-width="0.5" stroke-linejoin="round"/>
<polygon points="380.92,343.776 390.964,347.31 390.22,358.098 380.269,355.959" fill="#6e9a28" stroke="#6e9a28" stroke-width="0.5" stroke-linejoin="round"/>
<polygon points="390.964,347.31 401.659,336.615 400.915,349.542 395.986,358.098 390.22,358.098" fill="#364e12" stroke="#364e12" stroke-width="0.5" stroke-linejoin="round"/>
<polygon points="384.64,382.581 379.99,384.72 377.479,392.16 377.2,401.46 380.269,406.11 390.22,408.435 395.986,408.156 401.38,399.042 402.124,386.115" fill="#5a8a1c" stroke="#5a8a1c" stroke-width="0.5" stroke-linejoin="round"/>
<polygon points="384.64,382.581 401.659,386.115 390.964,396.81 380.92,393.276" fill="#92c43a" stroke="#92c43a" stroke-width="0.5" stroke-linejoin="round"/>
<polygon points="380.92,393.276 390.964,396.81 390.22,407.598 380.269,405.459" fill="#6e9a28" stroke="#6e9a28" stroke-width="0.5" stroke-linejoin="round"/>
<polygon points="390.964,396.81 401.659,386.115 400.915,399.042 395.986,407.598 390.22,407.598" fill="#364e12" stroke="#364e12" stroke-width="0.5" stroke-linejoin="round"/>
<polygon points="385.5,722.7 380.5,725 377.8,733 377.5,743 380.8,748 391.5,750.5 397.7,750.2 403.5,740.4 404.3,726.5" fill="#8c8c8c" stroke="#8c8c8c" stroke-width="0.5" stroke-linejoin="round"/>
<polygon points="385.5,722.7 403.8,726.5 392.3,738 381.5,734.2" fill="#d0d0d0" stroke="#d0d0d0" stroke-width="0.5" stroke-linejoin="round"/>
<polygon points="381.5,734.2 392.3,738 391.5,749.6 380.8,747.3" fill="#a8a8a8" stroke="#a8a8a8" stroke-width="0.5" stroke-linejoin="round"/>
<polygon points="392.3,738 403.8,726.5 403,740.4 397.7,749.6 391.5,749.6" fill="#555555" stroke="#555555" stroke-width="0.5" stroke-linejoin="round"/>
<polygon points="432.64,684.581 427.99,686.72 425.479,694.16 425.2,703.46 428.269,708.11 438.22,710.435 443.986,710.156 449.38,701.042 450.124,688.115" fill="#8c8c8c" stroke="#8c8c8c" stroke-width="0.5" stroke-linejoin="round"/>
<polygon points="432.64,684.581 449.659,688.115 438.964,698.81 428.92,695.276" fill="#d0d0d0" stroke="#d0d0d0" stroke-width="0.5" stroke-linejoin="round"/>
<polygon points="428.92,695.276 438.964,698.81 438.22,709.598 428.269,707.459" fill="#a8a8a8" stroke="#a8a8a8" stroke-width="0.5" stroke-linejoin="round"/>
<polygon points="438.964,698.81 449.659,688.115 448.915,701.042 443.986,709.598 438.22,709.598" fill="#555555" stroke="#555555" stroke-width="0.5" stroke-linejoin="round"/>
<polyline points="333.2,315 333.2,1000" fill="none" stroke="#9ae82c" stroke-width="0.9"/>
<polyline points="346.8,319 347.2,1004" fill="none" stroke="#9ae82c" stroke-width="0.9"/>
<polyline points="361,310 361,769" fill="none" stroke="#9ae82c" stroke-width="0.9"/>
<polyline points="371.7,314 371.7,321" fill="none" stroke="#9ae82c" stroke-width="0.9"/>
<polyline points="371.7,330 371.9,772" fill="none" stroke="#9ae82c" stroke-width="0.9"/>
<polyline points="403.4,334 403.4,551" fill="none" stroke="#9ae82c" stroke-width="0.9"/>
<polyline points="412,335 412,556" fill="none" stroke="#9ae82c" stroke-width="0.9"/>
<polyline points="449.2,677 449.2,917" fill="none" stroke="#9ae82c" stroke-width="0.9"/>
<polyline points="333.9,315 437.5,225.5 449,228.8 346.6,319" fill="none" stroke="#9ae82c" stroke-width="0.9"/>
<polyline points="360.8,309.6 433.5,246.3 444.9,249.7 371.5,313.7" fill="none" stroke="#9ae82c" stroke-width="0.9"/>
<polyline points="376.9,319 450.3,257.1" fill="none" stroke="#9ae82c" stroke-width="0.9"/>
<polyline points="288.1,226.2 421,240.5" fill="none" stroke="#9ae82c" stroke-width="0.9"/>
<polyline points="180.2,315 333,331.5" fill="none" stroke="#9ae82c" stroke-width="0.9"/>
<polyline points="180.2,323.8 333,340" fill="none" stroke="#9ae82c" stroke-width="0.9"/>
<polyline points="347.4,1004 449.4,917.4" fill="none" stroke="#9ae82c" stroke-width="0.9"/>
<polyline points="333,1000 347.4,1004" fill="none" stroke="#9ae82c" stroke-width="0.9"/>
<polyline points="449,228.8 449,254.4" fill="none" stroke="#9ae82c" stroke-width="0.9"/>
<polyline points="372,321 833.75,372.5" fill="none" stroke="#d4d4d4" stroke-width="0.8"/>
<polyline points="372,330 833.75,381.25" fill="none" stroke="#d4d4d4" stroke-width="0.8"/>
<polyline points="371,582.4 877.5,641" fill="none" stroke="#d4d4d4" stroke-width="0.8"/>
<polyline points="371,595 878.4,649.4" fill="none" stroke="#d4d4d4" stroke-width="0.8"/>
<polyline points="499.4,345 542.7,602" fill="none" stroke="#d4d4d4" stroke-width="0.8"/>
<polyline points="509,345 552,602" fill="none" stroke="#d4d4d4" stroke-width="0.8"/>
<polyline points="180.2,299.6 180,957.7" fill="none" stroke="#d4d4d4" stroke-width="0.8"/>
<polyline points="180.2,732.7 333,773.7" fill="none" stroke="#d4d4d4" stroke-width="0.8"/>
<polyline points="180.2,740 333,781.8" fill="none" stroke="#d4d4d4" stroke-width="0.8"/>
<polyline points="382.1,703.5 405.2,682.3 552.3,615" fill="none" stroke="#d4d4d4" stroke-width="0.8"/>
<polyline points="385,712.1 562,613" fill="none" stroke="#d4d4d4" stroke-width="0.8"/>
<polyline points="411.9,670.8 521.5,610.2" fill="none" stroke="#d4d4d4" stroke-width="0.8"/>
<polyline points="184.9,730.7 225.3,695.3" fill="none" stroke="#d4d4d4" stroke-width="0.8"/>
<polyline points="372.5,576.8 403.2,551.7" fill="none" stroke="#d4d4d4" stroke-width="0.8"/>
<polyline points="181.5,310.4 220.6,274.7" fill="none" stroke="#d4d4d4" stroke-width="0.8"/>
</svg>
<!-- right panel -->
<div class="a" style="left:1059px;top:159px;width:6px;height:847px;background:#cbcbcb"></div>
<div class="a" style="left:1064px;top:186px;width:2px;height:131px;background:#bdbdbd"></div>
<div class="a" style="left:1065px;top:160px;width:855px;height:26px;background:#f26f21"></div>
<div class="a" style="left:1082px;top:169px;font-size:12px;color:#fff;line-height:14px">Analysis</div>
<div class="a" style="left:1138px;top:164px;width:126px;height:22px;background:#f0f0f0"></div>
<div class="a" style="left:1150px;top:169px;font-size:12px;color:#f26f21;line-height:14px;white-space:nowrap">Rotational stiffness</div>
<div class="a" style="left:1081px;top:202px;font-size:12.9px;font-weight:bold;color:#f26f21;line-height:15px;white-space:nowrap">Rotational stiffness of joint component</div>
<div class="a" style="left:1076px;top:220px;width:790px;height:36px;background:#f0f0f0"></div>
<div class="a" style="left:1076px;top:256px;width:790px;height:30px;background:#e0e0e0"></div>
<div class="a" style="left:1076px;top:220px;width:790px;height:66px;border:1px solid #b4b4b4;border-bottom:2px solid #a8a8a8"></div>
<div class="a" style="left:1076px;top:256px;width:790px;height:1px;background:#c8c8c8"></div>
<div class="a" style="left:1105px;top:220px;width:1px;height:66px;background:#c8c8c8"></div>
<div class="a" style="left:1143px;top:220px;width:1px;height:66px;background:#c8c8c8"></div>
<div class="a" style="left:1193px;top:220px;width:1px;height:66px;background:#c8c8c8"></div>
<div class="a" style="left:1237px;top:220px;width:1px;height:66px;background:#c8c8c8"></div>
<div class="a" style="left:1287px;top:220px;width:1px;height:66px;background:#c8c8c8"></div>
<div class="a" style="left:1337px;top:220px;width:1px;height:66px;background:#c8c8c8"></div>
<div class="a" style="left:1415px;top:220px;width:1px;height:66px;background:#c8c8c8"></div>
<div class="a" style="left:1493px;top:220px;width:1px;height:66px;background:#c8c8c8"></div>
<div class="a" style="left:1544px;top:220px;width:1px;height:66px;background:#c8c8c8"></div>
<div class="a" style="left:1595px;top:220px;width:1px;height:66px;background:#c8c8c8"></div>
<div class="a" style="left:1645px;top:220px;width:1px;height:66px;background:#c8c8c8"></div>
<div class="a" style="left:1723px;top:220px;width:1px;height:66px;background:#c8c8c8"></div>
<div class="a" style="left:1801px;top:220px;width:1px;height:66px;background:#c8c8c8"></div>
<div class="th" style="left:1110px;top:231px">Item</div>
<div class="td" style="left:1110px;top:265px">B</div>
<div class="th" style="left:1148px;top:231px">Comp.</div>
<div class="td" style="left:1148px;top:265px">My</div>
<div class="th" style="left:1198px;top:231px">Loads</div>
<div class="td" style="left:1198px;top:265px">LE1</div>
<div class="th" style="left:1242px;top:223px">MEd</div>
<div class="th" style="left:1242px;top:239px">[kNm]</div>
<div class="td" style="left:1242px;top:265px">150.0</div>
<div class="th" style="left:1292px;top:223px">Mj,Rd</div>
<div class="th" style="left:1292px;top:239px">[kNm]</div>
<div class="td" style="left:1292px;top:265px">220.1</div>
<div class="th" style="left:1342px;top:223px">Sj,ini</div>
<div class="th" style="left:1342px;top:239px">[MNm/rad]</div>
<div class="td" style="left:1342px;top:265px">68.9</div>
<div class="th" style="left:1420px;top:223px">Sjs</div>
<div class="th" style="left:1420px;top:239px">[MNm/rad]</div>
<div class="td" style="left:1420px;top:265px">67.6</div>
<div class="th" style="left:1498px;top:223px">ϕ</div>
<div class="th" style="left:1498px;top:239px">[mrad]</div>
<div class="td" style="left:1498px;top:265px">2.2</div>
<div class="th" style="left:1549px;top:223px">ϕc</div>
<div class="th" style="left:1549px;top:239px">[mrad]</div>
<div class="td" style="left:1549px;top:265px">5.6</div>
<div class="th" style="left:1600px;top:223px">L</div>
<div class="th" style="left:1600px;top:239px">[m]</div>
<div class="td" style="left:1600px;top:265px">6.00</div>
<div class="th" style="left:1650px;top:223px">Sj,R</div>
<div class="th" style="left:1650px;top:239px">[MNm/rad]</div>
<div class="td" style="left:1650px;top:265px">142.4</div>
<div class="th" style="left:1728px;top:223px">Sj,P</div>
<div class="th" style="left:1728px;top:239px">[MNm/rad]</div>
<div class="td" style="left:1728px;top:265px">2.8</div>
<div class="th" style="left:1806px;top:231px">Class</div>
<div class="td" style="left:1806px;top:265px">Semi-rigid</div>
<svg style="left:1087px;top:265px" width="8" height="12"><path d="M1.5 1l5 5-5 5" fill="none" stroke="#333" stroke-width="1.5"/></svg>
<div class="a" style="left:1065px;top:317px;width:855px;height:5px;background:#cbcbcb"></div>
<div class="a" style="left:1065px;top:322px;width:855px;height:684px;background:#fff"></div>
<!-- chart -->
<svg style="left:0;top:0" width="1920" height="1040" font-family="Liberation Sans">
<text x="1336.5" y="345.8" text-anchor="middle" font-size="15" fill="#444">Stiffness diagram My - ϕy, LE1</text>
<line x1="1259.5" y1="373" x2="1259.5" y2="962.0" stroke="#e4e4e4" stroke-width="1"/>
<line x1="1397.7" y1="373" x2="1397.7" y2="962.0" stroke="#e4e4e4" stroke-width="1"/>
<line x1="1535.9" y1="373" x2="1535.9" y2="962.0" stroke="#e4e4e4" stroke-width="1"/>
<line x1="1121.3" y1="804.1" x2="1592" y2="804.1" stroke="#e4e4e4" stroke-width="1"/>
<line x1="1116" y1="804.1" x2="1121.3" y2="804.1" stroke="#bbb" stroke-width="1"/>
<text x="1116" y="808.1" text-anchor="end" font-size="11" fill="#555">100.0</text>
<line x1="1121.3" y1="646.2" x2="1592" y2="646.2" stroke="#e4e4e4" stroke-width="1"/>
<line x1="1116" y1="646.2" x2="1121.3" y2="646.2" stroke="#bbb" stroke-width="1"/>
<text x="1116" y="650.2" text-anchor="end" font-size="11" fill="#555">200.0</text>
<line x1="1121.3" y1="488.3" x2="1592" y2="488.3" stroke="#e4e4e4" stroke-width="1"/>
<line x1="1116" y1="488.3" x2="1121.3" y2="488.3" stroke="#bbb" stroke-width="1"/>
<text x="1116" y="492.3" text-anchor="end" font-size="11" fill="#555">300.0</text>
<text x="1116" y="966.0" text-anchor="end" font-size="11" fill="#555">0.0</text>
<line x1="1116" y1="962.0" x2="1121.3" y2="962.0" stroke="#bbb" stroke-width="1"/>
<text x="1121.3" y="981" text-anchor="middle" font-size="11" fill="#555">0.0</text>
<line x1="1121.3" y1="962.0" x2="1121.3" y2="966.0" stroke="#bbb" stroke-width="1"/>
<text x="1259.5" y="981" text-anchor="middle" font-size="11" fill="#555">5.0</text>
<line x1="1259.5" y1="962.0" x2="1259.5" y2="966.0" stroke="#bbb" stroke-width="1"/>
<text x="1397.7" y="981" text-anchor="middle" font-size="11" fill="#555">10.0</text>
<line x1="1397.7" y1="962.0" x2="1397.7" y2="966.0" stroke="#bbb" stroke-width="1"/>
<text x="1535.9" y="981" text-anchor="middle" font-size="11" fill="#555">15.0</text>
<line x1="1535.9" y1="962.0" x2="1535.9" y2="966.0" stroke="#bbb" stroke-width="1"/>
<line x1="1121.3" y1="373" x2="1121.3" y2="962.5" stroke="#c4c4c4" stroke-width="1.6"/>
<line x1="1120.5" y1="962.2" x2="1592" y2="962.2" stroke="#c4c4c4" stroke-width="1.6"/>
<text x="1357" y="997" text-anchor="middle" font-size="11.5" fill="#555">ϕ[mrad]</text>
<text transform="translate(1084,669) rotate(-90)" text-anchor="middle" font-size="11.5" fill="#555">M[kNm]</text>
<line x1="1121.3" y1="389.3" x2="1592" y2="389.3" stroke="#a9c8ea" stroke-width="1.3"/>
<line x1="1121.3" y1="614.5" x2="1592" y2="614.5" stroke="#a9c8ea" stroke-width="1.3"/>
<line x1="1121.3" y1="725.1" x2="1592" y2="725.1" stroke="#a9c8ea" stroke-width="1.3"/>
<line x1="1121.3" y1="730.4" x2="1592" y2="730.4" stroke="#a9c8ea" stroke-width="1.3"/>
<rect x="1121" y="373" width="103" height="16" fill="#7fa9dc" fill-opacity="0.85"/>
<text x="1122" y="385" text-anchor="start" font-size="11.6" fill="#3c4a5a" textLength="101" lengthAdjust="spacingAndGlyphs">Mc,Rd = 362.7 kNm</text>
<rect x="1491" y="599" width="101" height="16" fill="#7fa9dc" fill-opacity="0.85"/>
<text x="1591" y="611" text-anchor="end" font-size="11.6" fill="#3c4a5a" textLength="99" lengthAdjust="spacingAndGlyphs">Mj,Rd = 220.1 kNm</text>
<rect x="1470" y="732" width="122" height="16" fill="#7fa9dc" fill-opacity="0.85"/>
<text x="1591" y="744" text-anchor="end" font-size="11.6" fill="#3c4a5a" textLength="120" lengthAdjust="spacingAndGlyphs">2/3 Mj,Rd = 146.7 kNm</text>
<polyline points="1121.3,962.0 1591.8,886" fill="none" stroke="#2a2af0" stroke-width="1.3"/>
<polyline points="1121.3,962.0 1150.2,726" fill="none" stroke="#f6a71c" stroke-width="1.3"/>
<rect x="1121" y="726" width="94" height="16" fill="#7fa9dc" fill-opacity="0.85"/>
<text x="1122" y="738" text-anchor="start" font-size="11.6" fill="#3c4a5a" textLength="92" lengthAdjust="spacingAndGlyphs">MEd = 150.0 kNm</text>
<polyline points="1121.3,962.0 1183.3,730.6" fill="none" stroke="#1d7a1d" stroke-width="1.3"/>
<polyline points="1121.3,962 1140,870 1156.3,797 1163,772 1206.3,675.4 1223.7,651.7 1248.1,627.7 1302.1,604.6 1536.7,580 1591.8,577.3" fill="none" stroke="#0b6a0b" stroke-width="2.6" stroke-linejoin="round"/>
<path d="M1180 745.5 L1183.3 731 L1190 745.5z" fill="#b5d97f"/>
<rect x="1180" y="745.5" width="110" height="21" fill="#b9dc86"/>
<text x="1183" y="760.5" font-size="11" fill="#3d4a2a" textLength="104" lengthAdjust="spacingAndGlyphs">Sj,ini = 68.9 MNm/rad</text>
<circle cx="1183.3" cy="730.6" r="2.6" fill="#fff" stroke="#9ccc6a" stroke-width="1"/>
<rect x="1622" y="382.3" width="9" height="8.5" fill="#006400"/>
<text x="1636" y="391.3" font-size="11.5" fill="#555">Sj</text>
<rect x="1622" y="398.4" width="9" height="8.5" fill="#ffa500"/>
<text x="1636" y="407.4" font-size="11.5" fill="#555">Sj,R</text>
<rect x="1622" y="414.5" width="9" height="8.5" fill="#0000ff"/>
<text x="1636" y="423.5" font-size="11.5" fill="#555">Sj,P</text>
<rect x="1622" y="430.6" width="9" height="8.5" fill="#006400"/>
<text x="1636" y="439.6" font-size="11.5" fill="#555">Sj,ini</text>
</svg>
<!-- status bar -->
<div class="a" style="left:0;top:1006px;width:1920px;height:34px;background:linear-gradient(180deg,rgb(20,20,20) 0px,rgb(20,20,20) 1px,rgb(13,13,13) 1px,rgb(13,13,13) 2px,rgb(18,18,18) 2px,rgb(18,18,18) 3px,rgb(20,20,20) 3px,rgb(20,20,20) 4px,rgb(18,18,18) 4px,rgb(18,18,18) 5px,rgb(14,14,14) 5px,rgb(14,14,14) 6px,rgb(26,26,26) 6px,rgb(26,26,26) 7px,rgb(15,15,15) 7px,rgb(15,15,15) 8px,rgb(21,21,21) 8px,rgb(21,21,21) 9px,rgb(19,19,19) 9px,rgb(19,19,19) 10px,rgb(21,21,21) 10px,rgb(21,21,21) 11px,rgb(30,30,30) 11px,rgb(30,30,30) 12px,rgb(30,30,30) 12px,rgb(30,30,30) 13px,rgb(30,30,30) 13px,rgb(30,30,30) 14px,rgb(16,16,16) 14px,rgb(16,16,16) 15px,rgb(17,17,17) 15px,rgb(17,17,17) 16px,rgb(26,26,26) 16px,rgb(26,26,26) 17px,rgb(11,11,11) 17px,rgb(11,11,11) 18px,rgb(18,18,18) 18px,rgb(18,18,18) 19px,rgb(26,26,26) 19px,rgb(26,26,26) 20px,rgb(11,11,11) 20px,rgb(11,11,11) 21px,rgb(19,19,19) 21px,rgb(19,19,19) 22px,rgb(22,22,22) 22px,rgb(22,22,22) 23px,rgb(19,19,19) 23px,rgb(19,19,19) 24px,rgb(16,16,16) 24px,rgb(16,16,16) 25px,rgb(34,34,34) 25px,rgb(34,34,34) 26px,rgb(17,17,17) 26px,rgb(17,17,17) 27px,rgb(22,22,22) 27px,rgb(22,22,22) 28px,rgb(16,16,16) 28px,rgb(16,16,16) 29px,rgb(21,21,21) 29px,rgb(21,21,21) 30px,rgb(18,18,18) 30px,rgb(18,18,18) 31px,rgb(20,20,20) 31px,rgb(20,20,20) 32px,rgb(18,18,18) 32px,rgb(18,18,18) 33px,rgb(14,14,14) 33px,rgb(14,14,14) 34px)"></div>
<div class="a" style="left:0;top:1006px;width:1920px;height:34px;background:linear-gradient(90deg,rgba(0,0,0,0.2),rgba(255,255,255,0.03) 30%,rgba(0,0,0,0.2) 60%,rgba(255,255,255,0.03) 80%,rgba(0,0,0,0.2))"></div>
<div class="a" style="left:24px;top:1017px;font-size:11.4px;font-weight:bold;line-height:14px;white-space:nowrap;color:#8a8a8a">Design code:</div>
<div class="a" style="left:100px;top:1017px;font-size:11.4px;font-weight:bold;line-height:14px;color:#fff">EN</div>
<div class="a" style="left:136px;top:1017px;font-size:11.4px;font-weight:bold;line-height:14px;color:#8a8a8a">Analysis:</div>
<div class="a" style="left:190px;top:1017px;font-size:11.4px;font-weight:bold;line-height:14px;color:#fff">Stiffness</div>
<div class="a" style="left:259px;top:1017px;font-size:11.4px;font-weight:bold;line-height:14px;color:#8a8a8a">Units:</div>
<div class="a" style="left:300px;top:1017px;font-size:11.4px;font-weight:bold;line-height:14px;color:#fff">mm</div>
<div class="a" style="left:1797px;top:1017px;font-size:12px;line-height:14px;white-space:nowrap;color:#ddd"><span style="color:#f26f21">www.</span>ideastatica<span style="color:#f26f21">.com</span></div>
</body></html>
